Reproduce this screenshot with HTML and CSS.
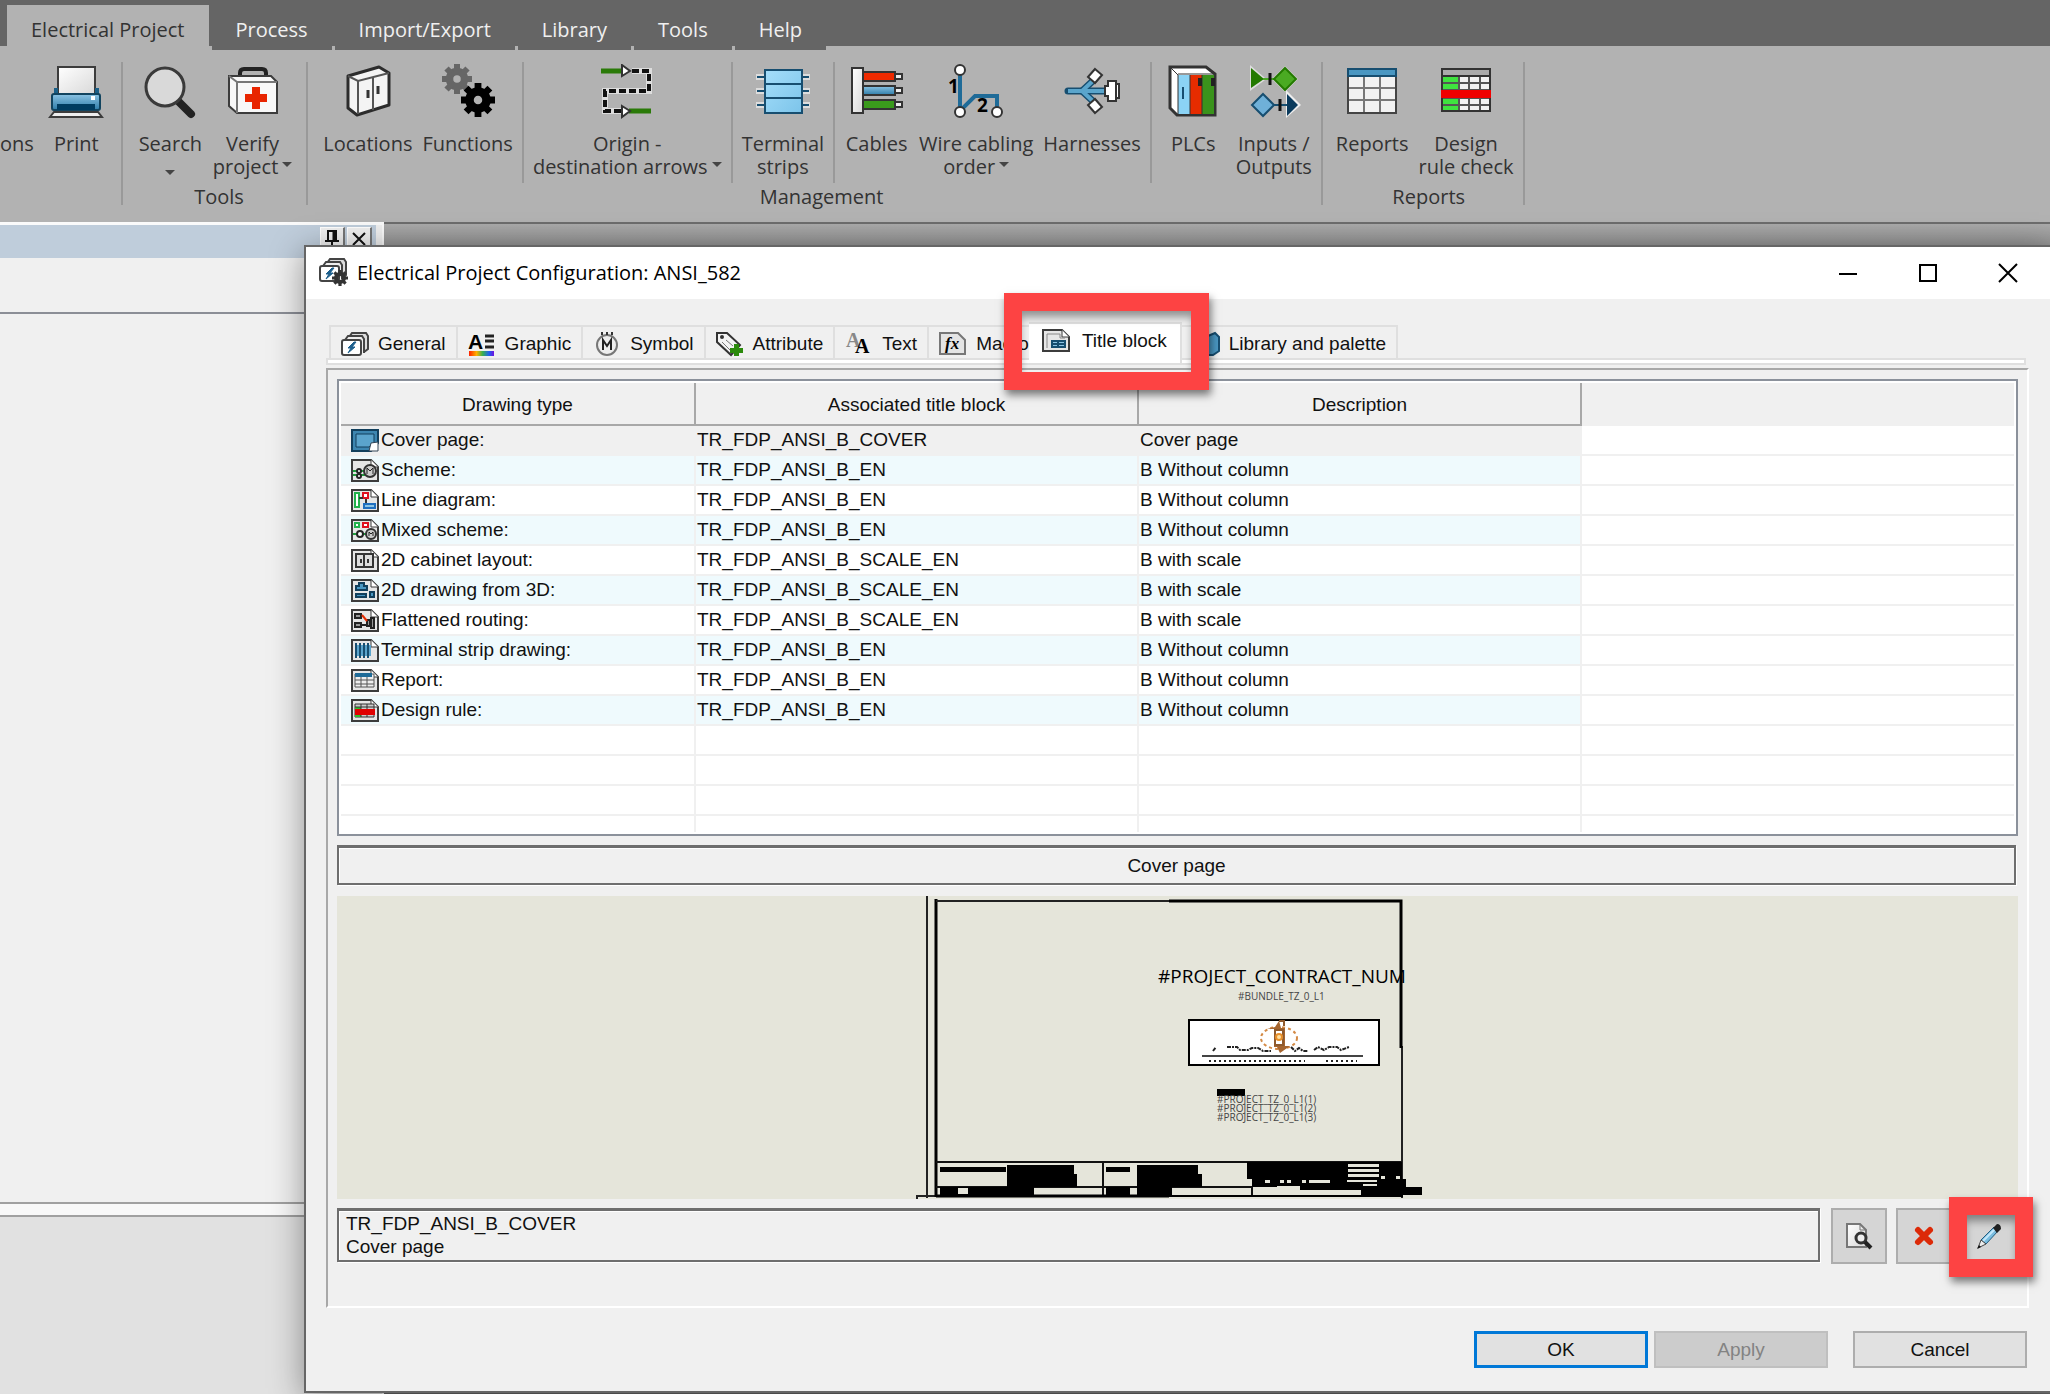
FILE: index.html
```html
<!DOCTYPE html>
<html lang="en">
<head>
    <meta charset="UTF-8">
    <meta name="viewport" content="width=device-width, initial-scale=1.0">
    <title>Electrical Project Configuration: ANSI_582</title>
    <link rel="stylesheet" href="styles.css">
</head>
<body>
    <!-- shared shapes -->
    <svg class="defs" aria-hidden="true">
        <defs>
            <linearGradient id="paper" x1="0" y1="0" x2="1" y2="1">
                <stop offset="0" stop-color="#ffffff"/>
                <stop offset="1" stop-color="#d8d8d8"/>
            </linearGradient>
            <linearGradient id="blue" x1="0" y1="0" x2="0" y2="1">
                <stop offset="0" stop-color="#8cc4e4"/>
                <stop offset="1" stop-color="#2d7ca8"/>
            </linearGradient>
            <linearGradient id="sky" x1="0" y1="0" x2="1" y2="1">
                <stop offset="0" stop-color="#a5defa"/>
                <stop offset="1" stop-color="#7cc4ea"/>
            </linearGradient>
            <linearGradient id="rainbow" x1="0" y1="0" x2="1" y2="0">
                <stop offset="0" stop-color="#ff2000"/>
                <stop offset=".3" stop-color="#ffb000"/>
                <stop offset=".55" stop-color="#35b050"/>
                <stop offset=".8" stop-color="#2060f0"/>
                <stop offset="1" stop-color="#7010e0"/>
            </linearGradient>
        </defs>
        <symbol id="sheet" viewBox="0 0 28 23">
            <path d="M1 1h19l7 7v14H1z" fill="#e6e6e6" stroke="#3c3c3c" stroke-width="2"/>
            <path d="M20 1v7h7" fill="#fff" stroke="#3c3c3c"/>
        </symbol>
        <symbol id="gear" viewBox="-10 -10 20 20">
            <circle r="5" fill="none" stroke="currentColor" stroke-width="5"/>
            <path d="M0-10V-6M0 10V6M-10 0H-6M10 0H6M-7-7l3 3M7 7l-3-3M-7 7l3-3M7-7l-3 3" stroke="currentColor" stroke-width="4"/>
        </symbol>
        <symbol id="stack" viewBox="0 0 28 24">
            <path d="M8 5l3-4h14l2 3v13l-4 3" fill="#ddd" stroke="#444" stroke-width="2"/>
            <path d="M4 8l3-4h14l2 3v14" fill="#eee" stroke="#444" stroke-width="2"/>
            <rect x="1" y="8" width="19" height="15" rx="2" fill="#fff" stroke="#444" stroke-width="2"/>
            <path d="M13 10l-6 6h3l-3 5 7-6h-3l4-5z" fill="#1c5f8c" stroke="#1c5f8c"/>
        </symbol>
    </svg>

    <nav class="ribbon-tabs">
        <a class="ribbon-tab active" href="#">Electrical Project</a>
        <a class="ribbon-tab" href="#">Process</a>
        <a class="ribbon-tab" href="#">Import/Export</a>
        <a class="ribbon-tab" href="#">Library</a>
        <a class="ribbon-tab" href="#">Tools</a>
        <a class="ribbon-tab" href="#">Help</a>
    </nav>

    <div class="ribbon">
        <div class="group first">
            <div class="group-items">
                <button class="tool cut">ons</button>
                <button class="tool">
                    <svg class="icon" viewBox="0 0 56 56">
                        <path d="M10 3h37v28H10z" fill="url(#paper)" stroke="#3c3c3c" stroke-width="2"/>
                        <path d="M6 24h4v5h37v-5h4v8H6z" fill="#1b5f86"/>
                        <rect x="4" y="30" width="48" height="16" rx="2" fill="url(#blue)" stroke="#12445f" stroke-width="2"/>
                        <path d="M9 40h38v6H9z" fill="#003c60"/>
                        <rect x="43" y="32" width="4" height="4" fill="#fff"/>
                        <path d="M6 48h44l4 5H2z" fill="#eee" stroke="#3c3c3c" stroke-width="2"/>
                    </svg>
                    Print
                </button>
            </div>
        </div>
        <div class="group">
            <div class="group-items">
                <button class="tool">
                    <svg class="icon" viewBox="0 0 56 56">
                        <path d="M36 37l13 13" stroke="#222" stroke-width="8" stroke-linecap="round"/>
                        <circle cx="23" cy="23" r="19" fill="#d9d9d9" stroke="#3a3a3a" stroke-width="3"/>
                    </svg>
                    Search<span class="caret-line"><i class="caret"></i></span>
                </button>
                <button class="tool">
                    <svg class="icon" viewBox="0 0 56 56">
                        <path d="M15 16V9q0-4 4-4h18q4 0 4 4v7" fill="none" stroke="#222" stroke-width="4"/>
                        <path d="M4 12h42l6 6v31H12l-8-7z" fill="#f8f8f8" stroke="#3c3c3c" stroke-width="2"/>
                        <path d="M4 12l8 6v31M12 18h40" fill="none" stroke="#777" stroke-width="2"/>
                        <path d="M27 23h8v7h7v8h-7v7h-8v-7h-7v-8h7z" fill="#e82500"/>
                    </svg>
                    Verify<br>project<i class="caret"></i>
                </button>
            </div>
            <div class="caption">Tools</div>
        </div>
        <div class="group management">
            <div class="group-items">
                <button class="tool">
                    <svg class="icon" viewBox="0 0 56 56">
                        <path d="M8 12l31-9 10 6v32L17 51 8 44z" fill="#f4f4f4" stroke="#2c2c2c" stroke-width="3" stroke-linejoin="round"/>
                        <path d="M8 12l10 5 31-8M18 17v33M33 13v33" fill="none" stroke="#555" stroke-width="2"/>
                        <path d="M28 26v8M38 22v8" stroke="#333" stroke-width="3"/>
                    </svg>
                    Locations
                </button>
                <button class="tool">
                    <svg class="icon" viewBox="0 0 56 56">
                        <use href="#gear" x="2" y="0" width="30" height="30" color="#666"/>
                        <use href="#gear" x="21" y="19" width="34" height="34" color="#000"/>
                    </svg>
                    Functions
                </button>
                <div class="sep"></div>
                <button class="tool">
                    <svg class="icon" viewBox="0 0 56 56">
                        <path d="M2 7h22M30 47h22" stroke="#2a7a08" stroke-width="5"/>
                        <path d="M33 7h17v20H6v20h18" fill="none" stroke="#ddd" stroke-width="6"/>
                        <path d="M33 7h17v20H6v20h18" fill="none" stroke="#111" stroke-width="4" stroke-dasharray="7 3"/>
                        <path d="M23 1l8 6-8 5zM23 42l8 5-8 6z" fill="#fff" stroke="#333" stroke-width="2"/>
                    </svg>
                    Origin -<br>destination arrows<i class="caret"></i>
                </button>
                <div class="sep"></div>
                <button class="tool">
                    <svg class="icon" viewBox="0 0 56 56">
                        <path d="M1 13h54M1 27h54M1 41h54" stroke="#ddd" stroke-width="6"/>
                        <path d="M2 13h52M2 27h52M2 41h52" stroke="#174e70" stroke-width="2"/>
                        <rect x="10" y="6" width="37" height="43" fill="url(#sky)" stroke="#174e70" stroke-width="2"/>
                        <path d="M10 20h37M10 34h37" stroke="#174e70" stroke-width="2"/>
                    </svg>
                    Terminal<br>strips
                </button>
                <div class="sep"></div>
                <button class="tool">
                    <svg class="icon" viewBox="0 0 56 56">
                        <g stroke="#333" stroke-width="2">
                            <path d="M44 10h9v5h-9zM44 24h9v5h-9zM44 38h9v5h-9z" fill="#eee"/>
                            <path d="M14 8h32v9H14z" fill="#ee2a00"/>
                            <path d="M14 22h32v9H14z" fill="url(#blue)"/>
                            <path d="M14 36h32v9H14z" fill="#3a9a1c"/>
                            <path d="M3 4h11v45H3z" fill="url(#paper)"/>
                        </g>
                    </svg>
                    Cables
                </button>
                <button class="tool">
                    <svg class="icon" viewBox="0 0 56 56">
                        <path d="M12 6v41l15-15h22v15" fill="none" stroke="#1f6b98" stroke-width="4"/>
                        <g fill="#fff" stroke="#333" stroke-width="2">
                            <circle cx="12" cy="6" r="5"/><circle cx="12" cy="48" r="5"/><circle cx="49" cy="48" r="5"/>
                        </g>
                        <text class="num" x="0" y="29">1</text>
                        <text class="num" x="29" y="48">2</text>
                    </svg>
                    Wire cabling<br>order<i class="caret"></i>
                </button>
                <button class="tool">
                    <svg class="icon" viewBox="0 0 56 56">
                        <path d="M18 27l14-13M18 27l14 13" stroke="#174e70" stroke-width="7"/>
                        <path d="M4 27h38" stroke="#174e70" stroke-width="7" stroke-linecap="round"/>
                        <path d="M4 27h38M18 27l14-13M18 27l14 13" stroke="#5aa5cc" stroke-width="4"/>
                        <g fill="#fff" stroke="#333" stroke-width="2">
                            <path d="M31 5l7 6-7 8-7-6zM31 49l7-6-7-8-7 6z"/>
                            <path d="M41 22h3v-5h8v20h-8v-5h-3z"/>
                            <path d="M52 20h3v14h-3z"/>
                        </g>
                    </svg>
                    Harnesses
                </button>
                <div class="sep"></div>
                <button class="tool">
                    <svg class="icon" viewBox="0 0 56 56">
                        <path d="M5 3h36l9 7v41H12l-7-7z" fill="#fff" stroke="#333" stroke-width="3"/>
                        <path d="M13 11h12v39H13z" fill="#8bd3f5"/>
                        <path d="M25 11h12v39H25z" fill="#e62c00"/>
                        <path d="M37 11h12v39H37z" fill="#3a931c"/>
                        <path d="M5 3l8 8v40M13 10h37M25 11v39M37 11v39" fill="none" stroke="#333" stroke-width="1"/>
                        <path d="M18 23v12" stroke="#174e70" stroke-width="2"/>
                        <path d="M33 14h4v8h-4zM46 14h4v8h-4z" fill="#222"/>
                    </svg>
                    PLCs
                </button>
                <button class="tool">
                    <svg class="icon" viewBox="0 0 56 56">
                        <path d="M4 1v26l15-11h8l12 12 13-13L39 2 27 14h-8z" fill="#ddd"/>
                        <path d="M5 4v20l13-9z" fill="#237a00"/>
                        <path d="M17 15h14" stroke="#4ca82a" stroke-width="2"/>
                        <path d="M24 9v12" stroke="#111" stroke-width="3"/>
                        <path d="M39 4l11 11-11 11-11-11z" fill="#4aaa22" stroke="#237a00" stroke-width="2"/>
                        <path d="M40 26l15 15-15 13z" fill="#eee"/>
                        <path d="M41 30v22l11-11z" fill="#0a3a5c"/>
                        <path d="M27 41h14" stroke="#174e70" stroke-width="2"/>
                        <path d="M34 35v12" stroke="#111" stroke-width="3"/>
                        <path d="M17 30l11 11-11 11L6 41z" fill="#6fb0d8" stroke="#174e70" stroke-width="2"/>
                    </svg>
                    Inputs /<br>Outputs
                </button>
            </div>
            <div class="caption">Management</div>
        </div>
        <div class="group last">
            <div class="group-items">
                <button class="tool">
                    <svg class="icon" viewBox="0 0 56 56">
                        <path d="M4 5h48v44H4z" fill="#f2f2f2"/>
                        <path d="M20 11v38M36 11v38M4 24h48M4 36h48" stroke="#777" stroke-width="2"/>
                        <path d="M4 5h48v44H4z" fill="none" stroke="#444" stroke-width="2"/>
                        <path d="M4 5h48v7H4z" fill="#4a97c2" stroke="#174e70" stroke-width="2"/>
                    </svg>
                    Reports
                </button>
                <button class="tool">
                    <svg class="icon" viewBox="0 0 56 56">
                        <path d="M4 5h48v42H4z" fill="#f2f2f2"/>
                        <path d="M4 12h17v35H4z" fill="#3fe23f"/>
                        <path d="M21 12v35M31 12v35M42 12v35M4 19h48M4 26h48M4 34h48M4 41h48" stroke="#555" stroke-width="2"/>
                        <path d="M4 5h48v42H4z" fill="none" stroke="#333" stroke-width="2"/>
                        <path d="M4 5h48v7H4z" fill="#aaa" stroke="#333" stroke-width="2"/>
                        <path d="M3 26h50v8H3z" fill="#f00000"/>
                    </svg>
                    Design<br>rule check
                </button>
            </div>
            <div class="caption">Reports</div>
        </div>
    </div>

    <div class="workspace">
        <aside class="side-panel">
            <div class="side-head">
                <button class="side-btn" aria-label="Pin">
                    <svg viewBox="0 0 22 22"><path d="M7 13V3h8v10M4 13h14M11 13v7" fill="none" stroke="#111" stroke-width="2"/><path d="M13 3v10" stroke="#111" stroke-width="3"/></svg>
                </button>
                <button class="side-btn" aria-label="Close">
                    <svg viewBox="0 0 22 22"><path d="M5 5l12 12M17 5L5 17" stroke="#111" stroke-width="2"/></svg>
                </button>
            </div>
            <div class="side-tools"></div>
            <div class="side-tree"></div>
            <div class="side-props"></div>
        </aside>

        <section class="dialog">
            <header class="titlebar">
                <svg class="app-icon" viewBox="0 0 30 28">
                    <use href="#stack" width="28" height="24"/>
                    <use href="#gear" x="13" y="12" width="16" height="16" color="#333"/>
                </svg>
                <h1>Electrical Project Configuration: ANSI_582</h1>
                <div class="window-btns">
                    <button aria-label="Minimize"><svg viewBox="0 0 20 20"><path d="M1 11h18" stroke="#000" stroke-width="2"/></svg></button>
                    <button aria-label="Maximize"><svg viewBox="0 0 20 20"><path d="M2 2h16v16H2z" fill="none" stroke="#000" stroke-width="2"/></svg></button>
                    <button aria-label="Close"><svg viewBox="0 0 20 20"><path d="M1 1l18 18M19 1L1 19" stroke="#000" stroke-width="2"/></svg></button>
                </div>
            </header>

            <div class="dialog-body">
                <div class="tabs" role="tablist">
                    <button class="tab" role="tab">
                        <svg class="tab-icon" viewBox="0 0 28 24"><use href="#stack" width="28" height="24"/></svg>General
                    </button>
                    <button class="tab" role="tab">
                        <svg class="tab-icon" viewBox="0 0 28 24">
                            <text class="letter" x="0" y="17">A</text>
                            <path d="M17 4h9M17 9h9M17 15h9" stroke="#222" stroke-width="3"/>
                            <path d="M1 19h25v5H1z" fill="url(#rainbow)"/>
                        </svg>Graphic
                    </button>
                    <button class="tab" role="tab">
                        <svg class="tab-icon" viewBox="0 0 28 24">
                            <circle cx="14" cy="13" r="10" fill="#eee" stroke="#777" stroke-width="2"/>
                            <path d="M9 0v3M14 0v3M19 0v3" stroke="#333" stroke-width="2"/>
                            <path d="M10 18V8l4 6 4-6v10" fill="none" stroke="#222" stroke-width="2"/>
                        </svg>Symbol
                    </button>
                    <button class="tab" role="tab">
                        <svg class="tab-icon" viewBox="0 0 28 24">
                            <path d="M1 1h10l13 12-9 10L1 10z" fill="#f4f4f4" stroke="#333" stroke-width="2"/>
                            <circle cx="6" cy="5" r="2" fill="#333"/>
                            <path d="M6 10l8 8M10 8l7 6" stroke="#777"/>
                            <path d="M18 12h5v4h4v5h-4v3h-5v-3h-4v-5h4z" fill="#2b8a0c"/>
                        </svg>Attribute
                    </button>
                    <button class="tab" role="tab">
                        <svg class="tab-icon" viewBox="0 0 28 24">
                            <text class="serif light" x="1" y="15">A</text>
                            <text class="serif" x="10" y="21">A</text>
                        </svg>Text
                    </button>
                    <button class="tab" role="tab">
                        <svg class="tab-icon" viewBox="0 0 28 24">
                            <path d="M1 1h18l7 7v14H1z" fill="#e4e4e4" stroke="#777" stroke-width="2"/>
                            <text class="fx" x="6" y="17">fx</text>
                        </svg>Macro
                    </button>
                    <button class="tab active" role="tab" aria-selected="true">
                        <svg class="tab-icon" viewBox="0 0 28 24">
                            <use href="#sheet" width="28" height="23"/>
                            <path d="M5 19V5h13v4h5" fill="none" stroke="#888"/>
                            <path d="M9 11h15v8H9z" fill="#174e70"/>
                            <path d="M11 13h4v1h-4zM17 13h5v1h-5zM11 16h4v1h-4zM17 16h5v1h-5z" fill="#8cc4e4"/>
                        </svg>Title block
                        <span class="highlight"></span>
                    </button>
                    <button class="tab" role="tab">
                        <svg class="tab-icon" viewBox="0 0 28 24">
                            <path d="M4 4h6v18H4z" fill="#e62c00"/><path d="M10 3h6v19h-6z" fill="#3a931c"/>
                            <path d="M16 4l7-3 4 4v14l-6 4h-5z" fill="#4a97c2" stroke="#174e70" stroke-width="2"/>
                        </svg>Library and palette
                    </button>
                </div>
                <div class="tab-line"></div>

                <div class="panel">
                    <div class="list">
                        <table>
                            <colgroup>
                                <col class="col-type"><col class="col-block"><col class="col-desc"><col>
                            </colgroup>
                            <thead>
                                <tr><th>Drawing type</th><th>Associated title block</th><th>Description</th><th></th></tr>
                            </thead>
                            <tbody>
                                <tr class="selected">
                                    <td><svg class="row-icon" viewBox="0 0 28 23"><path d="M1 1h26v13l-7 8H1z" fill="#3d86b0" stroke="#123f5c" stroke-width="2"/><path d="M5 5h18v9l-5 4H5z" fill="#5ba4cc" stroke="#123f5c"/><path d="M18 22l2-8 7-1v9z" fill="#fff" stroke="#345"/></svg>Cover page:</td>
                                    <td>TR_FDP_ANSI_B_COVER</td><td>Cover page</td><td></td>
                                </tr>
                                <tr>
                                    <td><svg class="row-icon" viewBox="0 0 28 23"><use href="#sheet" width="28" height="23"/><path d="M2 12h22M2 16h12" stroke="#1f9a3c" stroke-width="2"/><circle cx="8" cy="12" r="2" fill="#fff" stroke="#222" stroke-width="2"/><circle cx="8" cy="17" r="2" fill="#fff" stroke="#222" stroke-width="2"/><circle cx="19" cy="12" r="6" fill="#ccc" stroke="#333" stroke-width="2"/><path d="M16 15V9l3 3 3-3v6" fill="none" stroke="#222"/></svg>Scheme:</td>
                                    <td>TR_FDP_ANSI_B_EN</td><td>B Without column</td><td></td>
                                </tr>
                                <tr>
                                    <td><svg class="row-icon" viewBox="0 0 28 23"><use href="#sheet" width="28" height="23"/><path d="M4 4h4v14H4z" fill="#fff" stroke="#22b14c" stroke-width="2"/><path d="M12 4h5v5h-5z" fill="#fff" stroke="#e01020" stroke-width="2"/><path d="M8 9h4M15 10v6" stroke="#333" stroke-width="2"/><path d="M13 15h11v4H13z" fill="#8cc4e4" stroke="#1f6fc0" stroke-width="2"/></svg>Line diagram:</td>
                                    <td>TR_FDP_ANSI_B_EN</td><td>B Without column</td><td></td>
                                </tr>
                                <tr>
                                    <td><svg class="row-icon" viewBox="0 0 28 23"><use href="#sheet" width="28" height="23"/><path d="M4 4h4v4H4z" fill="#fff" stroke="#22b14c" stroke-width="2"/><path d="M12 4h5v4h-5z" fill="#fff" stroke="#e01020" stroke-width="2"/><path d="M2 15h16" stroke="#1f9a3c" stroke-width="2"/><circle cx="9" cy="15" r="3" fill="#fff" stroke="#222" stroke-width="2"/><circle cx="20" cy="15" r="5" fill="#ccc" stroke="#333" stroke-width="2"/><path d="M18 17v-4l2 2 2-2v4" fill="none" stroke="#222"/></svg>Mixed scheme:</td>
                                    <td>TR_FDP_ANSI_B_EN</td><td>B Without column</td><td></td>
                                </tr>
                                <tr>
                                    <td><svg class="row-icon" viewBox="0 0 28 23"><use href="#sheet" width="28" height="23"/><path d="M5 5h17v13H5zM13 5v13" fill="#ddd" stroke="#333" stroke-width="2"/><path d="M10 10v4M17 10v4" stroke="#333" stroke-width="2"/></svg>2D cabinet layout:</td>
                                    <td>TR_FDP_ANSI_B_SCALE_EN</td><td>B with scale</td><td></td>
                                </tr>
                                <tr>
                                    <td><svg class="row-icon" viewBox="0 0 28 23"><use href="#sheet" width="28" height="23"/><path d="M8 4h5v3h3v4H5V7h3zM5 15h10v3H5zM19 13h4v5h-4z" fill="#4a97c2" stroke="#123f5c" stroke-width="2"/></svg>2D drawing from 3D:</td>
                                    <td>TR_FDP_ANSI_B_SCALE_EN</td><td>B with scale</td><td></td>
                                </tr>
                                <tr>
                                    <td><svg class="row-icon" viewBox="0 0 28 23"><use href="#sheet" width="28" height="23"/><path d="M4 5h6v4H4zM4 14h6v4H4zM16 11h3v6h-3zM20 9h3v10h-3z" fill="#999" stroke="#222" stroke-width="2"/><path d="M11 6l5 6" stroke="#e62c00" stroke-width="2"/><path d="M11 16h4" stroke="#222" stroke-width="2"/></svg>Flattened routing:</td>
                                    <td>TR_FDP_ANSI_B_SCALE_EN</td><td>B with scale</td><td></td>
                                </tr>
                                <tr>
                                    <td><svg class="row-icon" viewBox="0 0 28 23"><use href="#sheet" width="28" height="23"/><path d="M4 6h16v11H4z" fill="#5ba4cc"/><path d="M5 4v15M9 4v15M13 4v15M17 4v15" stroke="#174e70" stroke-width="2"/></svg>Terminal strip drawing:</td>
                                    <td>TR_FDP_ANSI_B_EN</td><td>B Without column</td><td></td>
                                </tr>
                                <tr>
                                    <td><svg class="row-icon" viewBox="0 0 28 23"><use href="#sheet" width="28" height="23"/><path d="M4 5h19v13H4z" fill="#eee" stroke="#555"/><path d="M10 8v10M16 8v10M4 11h19M4 15h19" stroke="#555"/><path d="M4 4h17v4H4z" fill="#1f6b98"/></svg>Report:</td>
                                    <td>TR_FDP_ANSI_B_EN</td><td>B Without column</td><td></td>
                                </tr>
                                <tr>
                                    <td><svg class="row-icon" viewBox="0 0 28 23"><use href="#sheet" width="28" height="23"/><path d="M4 5h19v13H4z" fill="#ccc" stroke="#333"/><path d="M4 8h6v10H4z" fill="#2fc02f"/><path d="M10 5v13M16 5v13M4 8h19" stroke="#333"/><path d="M4 10h20v6H4z" fill="#e00000"/></svg>Design rule:</td>
                                    <td>TR_FDP_ANSI_B_EN</td><td>B Without column</td><td></td>
                                </tr>
                                <tr><td></td><td></td><td></td><td></td></tr>
                                <tr class="plain"><td></td><td></td><td></td><td></td></tr>
                                <tr><td></td><td></td><td></td><td></td></tr>
                                <tr class="plain last"><td></td><td></td><td></td><td></td></tr>
                            </tbody>
                        </table>
                    </div>

                    <div class="sunken preview-title">Cover page</div>

                    <div class="preview">
                        <svg class="drawing" viewBox="0 0 524 303">
                            <path d="M11 0v302M1 303v-3h19" fill="none" stroke="#222" stroke-width="2"/>
                            <path d="M20 3v298" stroke="#000" stroke-width="3"/>
                            <path d="M20 5h233M486 150v152" stroke="#222" stroke-width="2"/>
                            <path d="M253 5h232v147" fill="none" stroke="#000" stroke-width="3"/>
                            <text class="dwg-big" x="242" y="87">#PROJECT_CONTRACT_NUM</text>
                            <text class="dwg-small" x="322" y="104">#BUNDLE_TZ_0_L1</text>
                            <rect x="273" y="124" width="190" height="45" fill="#fff" stroke="#000" stroke-width="2"/>
                            <ellipse cx="363" cy="142" rx="18" ry="11" fill="none" stroke="#d48a45" stroke-width="2" stroke-dasharray="3 3"/>
                            <path d="M351 133l8-2 4-6 2 7h4v18h5l-10 7-3-6h-3v-18z" fill="#a5652f"/>
                            <path d="M359 134h8v15h-8z" fill="#fff" stroke="#8f5a2c" stroke-width="2"/>
                            <path d="M363 125h5v5" fill="none" stroke="#8f5a2c" stroke-width="2"/>
                            <circle cx="363" cy="141" r="3" fill="#ffe0a0" stroke="#e8902c" stroke-width="2"/>
                            <path d="M297 155l3-4M311 151h10l3 3h8l4-2h6l5 3h8M375 151l4 4 4-3 4 3h5M398 154l4-3 6 3 5-3h8l4 3 8-3" fill="none" stroke="#222" stroke-width="2" stroke-dasharray="4 1 2 1"/>
                            <path d="M286 160h161" stroke="#444" stroke-width="2"/>
                            <path d="M293 165h96M410 165h31" stroke="#222" stroke-width="2" stroke-dasharray="2 3"/>
                            <path d="M301 193h28v7h-28z"/>
                            <text class="dwg-small" x="301" y="207">#PROJECT_TZ_0_L1(1)</text>
                            <text class="dwg-small" x="301" y="216">#PROJECT_TZ_0_L1(2)</text>
                            <text class="dwg-small" x="301" y="225">#PROJECT_TZ_0_L1(3)</text>
                            <!-- title block strip -->
                            <path d="M20 266h466M20 291h316M187 266v34M336 291v9" stroke="#111" stroke-width="2" fill="none"/>
                            <path d="M20 300h233" stroke="#000" stroke-width="3"/>
                            <path d="M253 300h234" stroke="#000" stroke-width="2"/>
                            <path d="M24 271h66v5H24zM91 269h67v9h3v13h-9v0h-61zM24 291h94v8H24zM190 271h24v5h-24zM190 291h24v8h-24zM221 269h61v9h4v13h-65zM221 291h35v8h-35z"/>
                            <path d="M331 266h155v17h4v8h16v8h-61v-5h-61v-3h-48v-8h-5z"/>
                            <path d="M42 292h10v6H42zM432 268h31v3h-31zM432 273h31v3h-31zM432 278h31v3h-31zM431 284h30v2h-30zM447 288h14v2h-14zM349 284h5v3h-5zM364 284h4v3h-4zM371 284h4v3h-4zM386 284h4v3h-4zM393 284h21v3h-21zM361 290h23v5h-23zM465 280h4v3h-4zM480 280h4v3h-4z" fill="#e5e5da"/>
                        </svg>
                    </div>

                    <div class="file-row">
                        <div class="sunken file-name">TR_FDP_ANSI_B_COVER<br>Cover page</div>
                        <button class="icon-btn" aria-label="Preview">
                            <svg viewBox="0 0 28 28">
                                <path d="M2 2h13l6 6v17H2z" fill="url(#paper)" stroke="#777" stroke-width="2"/>
                                <path d="M15 2v6h6" fill="none" stroke="#777"/>
                                <circle cx="16" cy="16" r="5" fill="#eee" stroke="#333" stroke-width="3"/>
                                <path d="M20 20l6 6" stroke="#222" stroke-width="4"/>
                            </svg>
                        </button>
                        <button class="icon-btn" aria-label="Delete">
                            <svg viewBox="0 0 28 28"><path d="M8 8l12 12M20 8L8 20" stroke="#dc2a08" stroke-width="6" stroke-linecap="round"/></svg>
                        </button>
                        <button class="icon-btn" aria-label="Edit">
                            <svg viewBox="0 0 28 28">
                                <path d="M6 18L19 5l4 4-12 13z" fill="#79bde0" stroke="#245d80" stroke-width="1"/>
                                <path d="M8 19L20 7" stroke="#c5e8fa" stroke-width="2"/>
                                <path d="M18 6l4-4q4 0 4 5l-4 4z" fill="#222"/>
                                <path d="M6 18l5 4-8 4z" fill="#eee" stroke="#444"/>
                                <path d="M4 23l2 2-4 2z" fill="#111"/>
                            </svg>
                            <span class="highlight small"></span>
                        </button>
                    </div>
                </div>

                <footer class="actions">
                    <button class="btn primary">OK</button>
                    <button class="btn" disabled>Apply</button>
                    <button class="btn cancel">Cancel</button>
                </footer>
            </div>
        </section>
    </div>
</body>
</html>
```
FILE: styles.css
```css
* {
    box-sizing: border-box;
}
body {
    margin: 0;
    min-height: 100vh;
    display: flex;
    flex-direction: column;
    overflow: hidden;
    background: #656565;
    font-family: "Liberation Sans", Arial, sans-serif;
    font-size: 19px;
    color: #111;
}
button {
    margin: 0;
    padding: 0;
    border: 0;
    background: none;
    font: inherit;
    color: inherit;
}
.defs {
    position: absolute;
    width: 0;
    height: 0;
}

/* ribbon */
.ribbon-tabs {
    display: flex;
    gap: 3px;
    height: 50px;
    padding-left: 7px;
    background: linear-gradient(#656565 46px, #b2b2b2 46px);
    font-family: "Open Sans", "Noto Sans", sans-serif;
    font-size: 20px;
}
.ribbon-tab {
    height: 50px;
    padding: 0 24px;
    background: #656565;
    color: #f0f0f0;
    line-height: 60px;
    text-decoration: none;
    white-space: nowrap;
}
.ribbon-tab.active {
    margin-top: 5px;
    height: 45px;
    background: #b2b2b2;
    color: #333;
    line-height: 50px;
}
.ribbon {
    display: flex;
    height: 172px;
    padding-top: 12px;
    background: #b2b2b2;
    font-family: "Open Sans", "Noto Sans", sans-serif;
    font-size: 20px;
    line-height: 23px;
    color: #333;
}
.group {
    display: flex;
    flex-direction: column;
    height: 143px;
    padding: 0 9px 0 10px;
    border-right: 2px solid #999;
}
.group.first {
    padding: 0 7px 0 0;
}
.group.management {
    padding-right: 4px;
}
.group.last {
    padding: 0 4px 0 8px;
}
.group-items {
    display: flex;
    flex-shrink: 0;
    height: 124px;
}
.tool {
    display: flow-root;
    min-width: 75px;
    padding: 2px 5px 0;
    text-align: center;
    vertical-align: top;
    white-space: nowrap;
    align-self: flex-start;
}
.tool.cut {
    min-width: 0;
    padding: 70px 5px 0 0;
}
.icon {
    display: block;
    width: 56px;
    height: 56px;
    margin: 0 auto 12px;
}
.sep {
    width: 2px;
    height: 121px;
    margin: 0 4px;
    background: #999;
}
.caret {
    display: inline-block;
    margin-left: 4px;
    border: 5px solid transparent;
    border-top-color: #444;
    border-bottom: 0;
    vertical-align: 7px;
}
.caret-line {
    display: block;
    padding-top: 8px;
}
.caret-line .caret {
    margin-left: 0;
}
.caption {
    padding-left: 8px;
    line-height: 22px;
    text-align: center;
}
.num {
    font: bold 19px "Open Sans", sans-serif;
}

/* docked panel on the left */
.workspace {
    position: relative;
    display: flex;
    flex: 1;
    border-top: 2px solid #6d6d6d;
    background: linear-gradient(#aaa, #909090 24px, #656565 24px);
}
.side-panel {
    display: flex;
    flex-direction: column;
    width: 384px;
    margin-top: -2px;
    border-top: 3px solid #fafafa;
    border-right: 2px solid #fafafa;
    background: #f0f0f0;
}
.side-head {
    display: flex;
    justify-content: flex-end;
    gap: 2px;
    height: 33px;
    margin-right: 6px;
    padding: 2px 4px;
    background: #bfcddb;
}
.side-btn {
    width: 25px;
    height: 25px;
    background: #f0f0f0;
    border: 1px solid #fff;
    border-right: 2px solid #777;
    border-bottom: 2px solid #777;
}
.side-btn svg {
    display: block;
    width: 22px;
    height: 22px;
}
.side-tools {
    height: 56px;
    border-bottom: 2px solid #8b8e96;
}
.side-tree {
    flex: 1;
    border-bottom: 2px solid #a0a0a0;
}
.side-props {
    height: 190px;
    border-top: 11px solid #f8f8f8;
    background: #e1e1e1;
    box-shadow: inset 0 2px #a0a0a0;
}

/* configuration window */
.dialog {
    position: absolute;
    top: 21px;
    left: 304px;
    right: 0;
    border: 2px solid #666;
    border-right: 0;
    background: #f0f0f0;
    box-shadow: 0 6px 32px rgba(0, 0, 0, .4);
}
.titlebar {
    display: flex;
    align-items: center;
    height: 52px;
    padding: 0 12px 2px 13px;
    background: #fff;
}
.app-icon {
    width: 30px;
    height: 28px;
    margin-right: 8px;
}
.titlebar h1 {
    flex: 1;
    margin: 0;
    font: 20px "Open Sans", "Noto Sans", sans-serif;
    color: #000;
}
.window-btns {
    display: flex;
    gap: 20px;
}
.window-btns button {
    width: 60px;
    height: 40px;
}
.window-btns svg {
    width: 20px;
    height: 20px;
    vertical-align: middle;
}
.dialog-body {
    padding: 23px 21px 23px 20px;
}
.tabs {
    position: relative;
    display: flex;
    align-items: flex-start;
    padding-left: 3px;
}
.tab {
    display: flex;
    align-items: center;
    gap: 9px;
    height: 33px;
    margin-top: 3px;
    padding: 3px 10px 0;
    border-top: 2px solid #dfdfdf;
    border-right: 2px solid #dfdfdf;
    white-space: nowrap;
}
.tab:first-child {
    border-left: 2px solid #dfdfdf;
}
/* the open tab lies over the edge of its neighbour */
.tab.active {
    position: relative;
    z-index: 1;
    height: 41px;
    margin: 0 0 -5px -12px;
    padding: 0 13px 6px;
    gap: 12px;
    background: #fff;
}
.tab-icon {
    width: 28px;
    height: 24px;
    overflow: visible;
}
.letter {
    font: bold 21px "Liberation Sans", sans-serif;
}
.serif {
    font: bold 20px "Liberation Serif", serif;
}
.serif.light {
    fill: #888;
}
.fx {
    font: italic bold 17px "Liberation Serif", serif;
}
.tab-line {
    height: 7px;
    margin-right: 3px;
    border: 2px solid #dfdfdf;
    background: #fff;
}
.highlight {
    position: absolute;
    top: -31px;
    right: -29px;
    bottom: -27px;
    left: -25px;
    border: 18px solid #fd4343;
    box-shadow: 2px 5px 8px rgba(0, 0, 0, .5), inset 0 8px 8px -2px rgba(0, 0, 0, .4);
}
.highlight.small {
    top: -13px;
    right: -18px;
    bottom: -15px;
    left: -14px;
}

.panel {
    margin-top: 3px;
    padding: 9px;
    padding-bottom: 42px;
    border: 2px solid #fff;
    border-top-color: #a8a8a8;
    border-left-color: #a8a8a8;
}
.list {
    padding: 2px;
    border: 2px solid #8b919b;
    background: #fff;
}
table {
    width: 100%;
    table-layout: fixed;
    border-collapse: separate;
    border-spacing: 0;
}
.col-type {
    width: 355px;
}
.col-block,
.col-desc {
    width: 443px;
}
th {
    height: 43px;
    padding: 2px 0 0;
    border-right: 2px solid #a8a8a8;
    border-bottom: 2px solid #a8a8a8;
    background: #f0f0f0;
    font-weight: normal;
}
th:last-child {
    border-color: #f0f0f0;
}
td {
    height: 30px;
    padding: 0 0 0 1px;
    border-right: 2px solid #f0f0f0;
    border-bottom: 2px solid #f0f0f0;
    line-height: 28px;
    white-space: nowrap;
}
td:first-child {
    padding-left: 10px;
}
td:last-child {
    border-right: 0;
}
tr:nth-child(even):not(.plain) td:not(:last-child) {
    background: #effafd;
}
.selected td:not(:last-child) {
    background: #f0f0f0;
}
.last td {
    height: 16px;
    border-bottom: 0;
}
.row-icon {
    width: 28px;
    height: 23px;
    margin-right: 2px;
    vertical-align: middle;
}

.sunken {
    border: 2px solid #6e6e6e;
    border-top-width: 3px;
    box-shadow: 1px 1px #fff, inset 1px 1px #fff;
}
.preview-title {
    height: 40px;
    margin: 9px 2px 11px 0;
    line-height: 36px;
    text-align: center;
}
.preview {
    height: 303px;
    background: #e5e5da;
    text-align: center;
}
.drawing {
    width: 524px;
    height: 303px;
}
.dwg-big {
    font: 19px "Open Sans", sans-serif;
}
.dwg-small {
    font: 10px "Open Sans", sans-serif;
    fill: #444;
}
.file-row {
    display: flex;
    gap: 9px;
    height: 56px;
    margin: 9px 1px 0 0;
}
.file-name {
    flex: 1;
    height: 54px;
    margin-right: 2px;
    padding: 1px 7px;
    line-height: 23px;
}
.icon-btn {
    position: relative;
    width: 56px;
    border: 2px solid #adadad;
    background: #d5d5d5;
}
.icon-btn svg {
    width: 28px;
    height: 28px;
    vertical-align: middle;
}
.actions {
    display: flex;
    justify-content: flex-end;
    gap: 6px;
    margin: 23px 2px 0 0;
}
.btn {
    width: 174px;
    height: 37px;
    border: 2px solid #adadad;
    background: #e1e1e1;
}
.btn.primary {
    border: 3px solid #0078d7;
}
.btn:disabled {
    border-color: #bfbfbf;
    background: #ccc;
    color: #838383;
}
.btn.cancel {
    margin-left: 19px;
}
```
